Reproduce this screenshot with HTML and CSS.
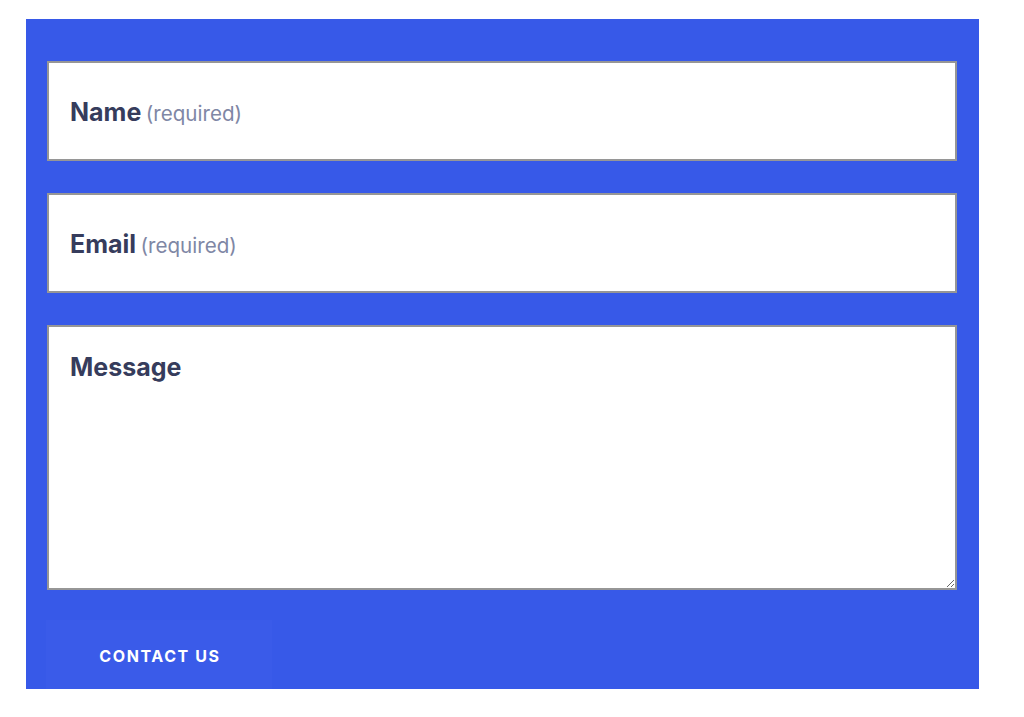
FILE: index.html
```html
<!DOCTYPE html>
<html lang="en">
<head>
<meta charset="utf-8">
<title>Contact</title>
<link rel="stylesheet" href="styles.css">
</head>
<body>
<div class="page">
  <form class="panel">
    <div class="field">
      <input class="input" type="text" id="name" aria-label="Name">
      <label class="label" for="name"><strong>Name</strong> <span class="req">(required)</span></label>
    </div>
    <div class="field">
      <input class="input" type="email" id="email" aria-label="Email">
      <label class="label" for="email"><strong>Email</strong> <span class="req">(required)</span></label>
    </div>
    <div class="field field-area">
      <textarea class="textarea" id="message" aria-label="Message"></textarea>
      <label class="label label-top" for="message"><strong>Message</strong></label>
    </div>
    <button class="button" type="button">CONTACT US</button>
  </form>
</div>
</body>
</html>
```
FILE: styles.css
```css
html, body {
  margin: 0;
  padding: 0;
  background: #ffffff;
}
body {
  font-family: Inter, "Noto Sans", "Liberation Sans", sans-serif;
}
.page {
  padding: 19px 0 0 26px;
}
.panel {
  box-sizing: border-box;
  width: 953px;
  background: #3759e8;
  padding: 42px 22px 0 21px;
  display: flex;
  flex-direction: column;
  gap: 32px;
}
.field {
  position: relative;
}
.input, .textarea {
  display: block;
  box-sizing: border-box;
  width: 910px;
  margin: 0;
  background: #ffffff;
  border: 2px solid #969696;
  border-radius: 0;
  outline: none;
  font-family: inherit;
}
.input {
  height: 100px;
}
.textarea {
  height: 265px;
  resize: vertical;
}
.label {
  position: absolute;
  left: 23px;
  top: calc(50% + 2px);
  transform: translateY(-47%);
  line-height: 30px;
  color: #363c5c;
  pointer-events: none;
  white-space: nowrap;
}
.label strong {
  font-size: 25px;
  font-weight: 700;
}
.label-top {
  top: 27px;
  transform: none;
}
.req {
  font-size: 20.6px;
  font-weight: 400;
  color: #7f87a5;
}
.button {
  align-self: flex-start;
  margin-top: -2px;
  width: 226px;
  height: 69px;
  background: #3a5be9;
  color: #ffffff;
  border: none;
  font-family: inherit;
  font-size: 16px;
  font-weight: 700;
  letter-spacing: 1.6px;
  padding: 2px 0 0 2px;
  margin-left: -1px;
}
```
